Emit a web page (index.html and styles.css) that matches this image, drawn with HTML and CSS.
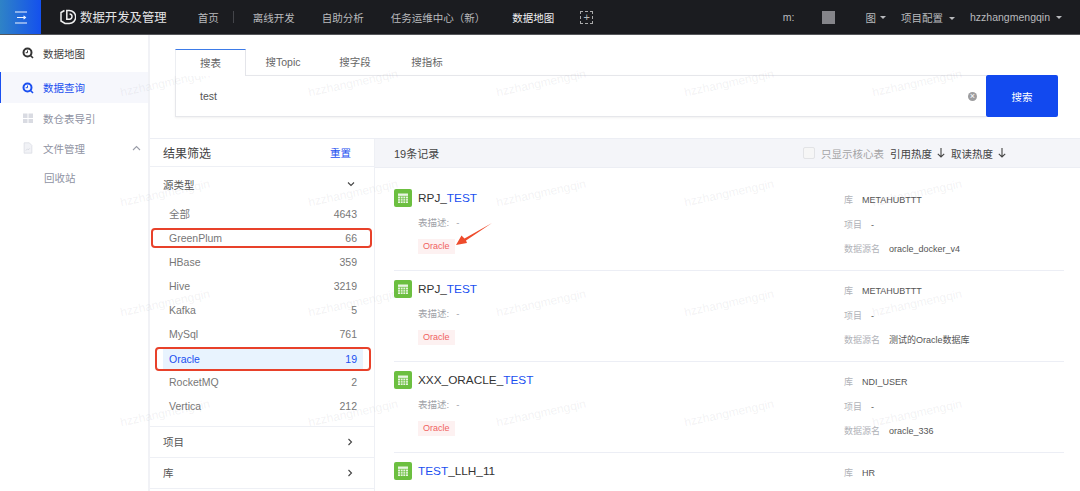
FILE: index.html
```html
<!DOCTYPE html>
<html lang="zh-CN">
<head>
    <meta charset="UTF-8">
    <title>数据地图</title>
    <link rel="stylesheet" href="styles.css">
</head>
<body>

    <!-- Top bar -->
    <div class="navbar">
        <div class="menu-btn">
            <svg width="12" height="13" viewBox="0 0 12 13"><path d="M0 1h12M0 12h12M2 6.500h7.500M8.500 4.800 10.500 6.500 8.500 8.200" fill="none" stroke="#f2f6ff" stroke-width="1.100"/></svg>
        </div>
        <div class="logo">
            <svg width="16" height="16" viewBox="0 0 16 16"><path d="M4.500 1.500 1 3.500V12l4 2.500h4.200a6.500 6.500 0 0 0 0-13H6.800v8.700h2.400a2.600 2.600 0 0 0 .4-5.200" fill="none" stroke="#f0f0f0" stroke-width="1.500"/></svg>
            <span>数据开发及管理</span>
        </div>
        <div class="nav-links">
            <a class="nav-home">首页</a>
            <i class="nav-sep"></i>
            <a>离线开发</a>
            <a>自助分析</a>
            <a>任务运维中心（新）</a>
            <a class="active">数据地图</a>
            <span class="nav-add">+</span>
        </div>
        <div class="nav-right">
            <span class="nav-project">m:<b class="redact"></b>图<i class="caret"></i></span>
            <span>项目配置<i class="caret"></i></span>
            <span>hzzhangmengqin<i class="caret"></i></span>
        </div>
    </div>

    <div class="page">
        <!-- Sidebar -->
        <div class="sidebar">
            <div class="side-title">
                <svg class="side-icon" viewBox="0 0 12 12"><circle cx="5.500" cy="5.500" r="4" fill="none" stroke="#333" stroke-width="2"/><path d="M8.500 8.500 11 11" stroke="#333" stroke-width="1.600"/><path d="M5.500 3.500v2.200H3.700" fill="none" stroke="#333"/></svg>
                数据地图
            </div>
            <div class="side-item current">
                <svg class="side-icon" viewBox="0 0 12 12"><circle cx="5.500" cy="5.500" r="4" fill="none" stroke="#1a4ff0" stroke-width="2"/><path d="M8.500 8.500 11 11" stroke="#1a4ff0" stroke-width="1.600"/><path d="M5.500 3.500v2.200H3.700" fill="none" stroke="#1a4ff0"/></svg>
                数据查询
            </div>
            <div class="side-item">
                <svg class="side-icon" viewBox="0 0 12 12"><path d="M1 1.500h4.500V6H1zM6.500 1.500H11V6H6.500zM1 7h4.500v4H1zM6.500 7H11v4H6.500z" fill="#d9dbe2"/></svg>
                数仓表导引
            </div>
            <div class="side-item">
                <svg class="side-icon" viewBox="0 0 12 14"><path d="M1.500 1h6l3 3v9h-9z" fill="#f1f2f6" stroke="#dcdee5"/><path d="M3.500 10l2-2 1 1L8 7.500" fill="none" stroke="#d3d5dd"/></svg>
                文件管理
                <svg class="side-chevron" width="9" height="6" viewBox="0 0 9 6"><path d="M1 5 4.500 1.500 8 5" fill="none" stroke="#9a9da8" stroke-width="1.100"/></svg>
            </div>
            <div class="side-sub">回收站</div>
        </div>

        <div class="content">
            <!-- Search -->
            <div class="search-area">
                <div class="tabs">
                    <div class="tab active">搜表</div>
                    <div class="tab tab-topic">搜Topic</div>
                    <div class="tab tab-field">搜字段</div>
                    <div class="tab tab-metric">搜指标</div>
                </div>
                <div class="search-row">
                    <div class="search-input">
                        <span>test</span>
                        <i class="clear-btn">×</i>
                    </div>
                    <button class="search-btn">搜索</button>
                </div>
            </div>

            <div class="main">
                <!-- Filters -->
                <div class="filters">
                    <div class="filters-head">
                        <span>结果筛选</span>
                        <a>重置</a>
                    </div>
                    <div class="group-title">
                        <span>源类型</span>
                        <svg width="8" height="6" viewBox="0 0 8 6"><path d="M1 1.500 4 4.500 7 1.500" fill="none" stroke="#444" stroke-width="1.100"/></svg>
                    </div>
                    <div class="filter-list">
                        <div class="filter-row"><span>全部</span><span>4643</span></div>
                        <div class="filter-row marked"><span>GreenPlum</span><span>66</span></div>
                        <div class="filter-row"><span>HBase</span><span>359</span></div>
                        <div class="filter-row"><span>Hive</span><span>3219</span></div>
                        <div class="filter-row"><span>Kafka</span><span>5</span></div>
                        <div class="filter-row"><span>MySql</span><span>761</span></div>
                        <div class="filter-row selected"><span>Oracle</span><span>19</span></div>
                        <div class="filter-row"><span>RocketMQ</span><span>2</span></div>
                        <div class="filter-row"><span>Vertica</span><span>212</span></div>
                    </div>
                    <div class="group-closed">
                        <span>项目</span>
                        <svg width="6" height="8" viewBox="0 0 6 8"><path d="M1.500 1 4.500 4 1.500 7" fill="none" stroke="#444" stroke-width="1.100"/></svg>
                    </div>
                    <div class="group-closed">
                        <span>库</span>
                        <svg width="6" height="8" viewBox="0 0 6 8"><path d="M1.500 1 4.500 4 1.500 7" fill="none" stroke="#444" stroke-width="1.100"/></svg>
                    </div>
                </div>

                <!-- Results -->
                <div class="results">
                    <div class="results-head">
                        <span class="count">19条记录</span>
                        <div class="sorts">
                            <span class="core-check"><i></i>只显示核心表</span>
                            <span class="sort">引用热度<svg width="8" height="10" viewBox="0 0 8 10"><path d="M4 0v9M.8 5.800 4 9l3.200-3.200" fill="none" stroke="#444" stroke-width="1.100"/></svg></span>
                            <span class="sort">取读热度<svg width="8" height="10" viewBox="0 0 8 10"><path d="M4 0v9M.8 5.800 4 9l3.200-3.200" fill="none" stroke="#444" stroke-width="1.100"/></svg></span>
                        </div>
                    </div>
                    <div class="result-list">
                        <div class="result">
                            <div class="result-left">
                                <div class="result-name">
                                    <svg class="table-icon" viewBox="0 0 18 18"><rect width="18" height="18" rx="2" fill="#6cbf40"/><path d="M4 4.500h10v9.500H4z" fill="#e9f5e2"/><path d="M4 7.300h10M4 9.700h10M4 12h10M6.500 7.300V14M9 7.300V14M11.500 7.300V14" stroke="#6cbf40" stroke-width=".7"/></svg>
                                    RPJ_<em>TEST</em>
                                </div>
                                <div class="result-desc">表描述:<span>-</span></div>
                                <span class="tag">Oracle</span>
                                <svg class="arrow" width="40" height="24" viewBox="0 0 40 24"><path d="M2 23 7.500 13.500 10.500 16.500 38 1 12 18.500 13 21z" fill="#ee4b2b"/></svg>
                            </div>
                            <div class="result-meta">
                                <div><label>库</label>METAHUBTTT</div>
                                <div><label>项目</label>-</div>
                                <div><label>数据源名</label>oracle_docker_v4</div>
                            </div>
                        </div>
                        <div class="result">
                            <div class="result-left">
                                <div class="result-name">
                                    <svg class="table-icon" viewBox="0 0 18 18"><rect width="18" height="18" rx="2" fill="#6cbf40"/><path d="M4 4.500h10v9.500H4z" fill="#e9f5e2"/><path d="M4 7.300h10M4 9.700h10M4 12h10M6.500 7.300V14M9 7.300V14M11.500 7.300V14" stroke="#6cbf40" stroke-width=".7"/></svg>
                                    RPJ_<em>TEST</em>
                                </div>
                                <div class="result-desc">表描述:<span>-</span></div>
                                <span class="tag">Oracle</span>
                            </div>
                            <div class="result-meta">
                                <div><label>库</label>METAHUBTTT</div>
                                <div><label>项目</label>-</div>
                                <div><label>数据源名</label>测试的Oracle数据库</div>
                            </div>
                        </div>
                        <div class="result">
                            <div class="result-left">
                                <div class="result-name">
                                    <svg class="table-icon" viewBox="0 0 18 18"><rect width="18" height="18" rx="2" fill="#6cbf40"/><path d="M4 4.500h10v9.500H4z" fill="#e9f5e2"/><path d="M4 7.300h10M4 9.700h10M4 12h10M6.500 7.300V14M9 7.300V14M11.500 7.300V14" stroke="#6cbf40" stroke-width=".7"/></svg>
                                    XXX_ORACLE_<em>TEST</em>
                                </div>
                                <div class="result-desc">表描述:<span>-</span></div>
                                <span class="tag">Oracle</span>
                            </div>
                            <div class="result-meta">
                                <div><label>库</label>NDI_USER</div>
                                <div><label>项目</label>-</div>
                                <div><label>数据源名</label>oracle_336</div>
                            </div>
                        </div>
                        <div class="result">
                            <div class="result-left">
                                <div class="result-name">
                                    <svg class="table-icon" viewBox="0 0 18 18"><rect width="18" height="18" rx="2" fill="#6cbf40"/><path d="M4 4.500h10v9.500H4z" fill="#e9f5e2"/><path d="M4 7.300h10M4 9.700h10M4 12h10M6.500 7.300V14M9 7.300V14M11.500 7.300V14" stroke="#6cbf40" stroke-width=".7"/></svg>
                                    <em>TEST</em>_LLH_11
                                </div>
                                <div class="result-desc">表描述:<span>-</span></div>
                            </div>
                            <div class="result-meta">
                                <div><label>库</label>HR</div>
                            </div>
                        </div>
                    </div>
                </div>
            </div>
        </div>
    </div>

    <!-- Watermark laid over the page -->
    <div class="watermark">
        <span>hzzhangmengqin</span><span>hzzhangmengqin</span><span>hzzhangmengqin</span><span>hzzhangmengqin</span><span>hzzhangmengqin</span>
        <span>hzzhangmengqin</span><span>hzzhangmengqin</span><span>hzzhangmengqin</span><span>hzzhangmengqin</span><span>hzzhangmengqin</span>
        <span>hzzhangmengqin</span><span>hzzhangmengqin</span><span>hzzhangmengqin</span><span>hzzhangmengqin</span><span>hzzhangmengqin</span>
        <span>hzzhangmengqin</span><span>hzzhangmengqin</span><span>hzzhangmengqin</span><span>hzzhangmengqin</span><span>hzzhangmengqin</span>
    </div>

</body>
</html>
```

FILE: styles.css
```css
/* Reset */
* {
    margin: 0;
    padding: 0;
    box-sizing: border-box;
}

html, body {
    height: 491px;
    overflow: hidden;
}

body {
    position: relative;
    background-color: #fff;
    color: #333;
    font-family: "Liberation Sans", "Noto Sans CJK SC", sans-serif;
    font-size: 10.5px;
}

/* Top bar */
.navbar {
    display: flex;
    align-items: center;
    height: 35px;
    background-color: #1b1c20;
    border-bottom: 1px solid #55565a;
    color: #b9babd;
}

.menu-btn {
    display: flex;
    align-items: center;
    justify-content: center;
    width: 41px;
    height: 34px;
    background: linear-gradient(90deg, #2f83c6, #1450ee);
}

.logo {
    display: flex;
    align-items: center;
    gap: 4px;
    margin-left: 19px;
    color: #e4e4e6;
    font-size: 12.4px;
}

.nav-links {
    display: flex;
    align-items: center;
    margin-left: 31px;
}

.nav-links a {
    margin-right: 27px;
}

.nav-links a.nav-home {
    margin-right: 14px;
}

.nav-sep {
    width: 1px;
    height: 12px;
    background-color: #44454a;
    margin-right: 19px;
}

.nav-links a.active {
    color: #f0f0f1;
    margin-right: 26px;
}

.nav-add {
    display: flex;
    align-items: center;
    justify-content: center;
    width: 13px;
    height: 13px;
    border: 1px dashed #aaa;
    font-size: 11px;
    line-height: 1;
}

.nav-right {
    display: flex;
    align-items: center;
    gap: 15px;
    margin-left: auto;
    margin-right: 18px;
}

.nav-project {
    display: flex;
    align-items: center;
}

.redact {
    display: block;
    width: 13px;
    height: 13px;
    margin: 0 31px 0 27px;
    background-color: #85858a;
}

.caret {
    display: inline-block;
    margin-left: 6px;
    vertical-align: 2px;
    border-left: 3px solid transparent;
    border-right: 3px solid transparent;
    border-top: 3px solid #b9babd;
}

.nav-project .caret {
    margin-left: 4px;
}

/* Page */
.page {
    display: flex;
    height: 456px;
}

.sidebar {
    flex: none;
    width: 150px;
    border-right: 2px solid #f1f2f6;
    color: #8f93a3;
}

.side-title,
.side-item {
    position: relative;
    display: flex;
    align-items: center;
    height: 30px;
    padding-left: 22px;
    gap: 9px;
}

.side-title {
    height: 36px;
    margin-bottom: 1px;
    color: #444;
}

.side-item.current {
    height: 31px;
    background-color: #f6f7fc;
    border-left: 1px solid #1a4ff0;
    padding-left: 21px;
    color: #1a4ff0;
}

.side-icon {
    width: 12px;
    height: 12px;
}

.side-chevron {
    position: absolute;
    right: 7px;
    top: 12px;
}

.side-sub {
    padding-left: 44px;
    line-height: 30px;
}

.content {
    flex: 1;
    min-width: 0;
}

/* Search */
.search-area {
    height: 103px;
    padding: 14px 22px 0 25px;
}

.tabs {
    display: flex;
    height: 27px;
}

.tab {
    line-height: 26px;
    text-align: center;
    color: #666;
}

.tab.active {
    width: 71px;
    border-top: 1px solid #3d7be8;
    border-right: 1px solid #e4e5ea;
    border-left: 1px solid #eceef2;
    background-color: #fff;
    position: relative;
    z-index: 1;
}

.tab-topic {
    width: 74px;
}

.tab-field {
    width: 70px;
}

.tab-metric {
    width: 74px;
}

.search-row {
    display: flex;
    margin-top: -1px;
}

.search-input {
    display: flex;
    flex: 1;
    align-items: center;
    justify-content: space-between;
    height: 42px;
    padding: 0 9px 0 24px;
    border: 1px solid #e6e7eb;
    border-right: 0;
    box-shadow: 0 1px 2px rgba(0, 0, 0, 0.06);
    color: #555;
}

.clear-btn {
    display: flex;
    align-items: center;
    justify-content: center;
    width: 9px;
    height: 9px;
    border-radius: 50%;
    background-color: #9d9d9f;
    color: #fff;
    font-style: normal;
    font-size: 9px;
    line-height: 1;
}

.search-btn {
    width: 72px;
    height: 42px;
    border: none;
    border-radius: 2px;
    background-color: #1249ef;
    color: #fff;
    font-family: inherit;
    font-size: 10.5px;
}

/* Main area */
.main {
    display: flex;
    height: 353px;
    border-top: 1px solid #eceef4;
}

.filters {
    flex: none;
    width: 225px;
    border-right: 1px solid #eef0f5;
}

.filters-head {
    display: flex;
    align-items: center;
    justify-content: space-between;
    height: 28px;
    padding: 0 23px 0 13px;
    border-bottom: 1px solid #eef0f5;
    font-size: 12px;
    color: #444;
}

.filters-head a {
    color: #1a4ff0;
    font-size: 10.5px;
}

.group-title {
    display: flex;
    align-items: center;
    justify-content: space-between;
    height: 34.5px;
    padding: 0 19px 0 13px;
    color: #555;
}

.filter-list {
    padding-bottom: 7.5px;
    border-bottom: 1px solid #eef0f5;
}

.filter-row {
    position: relative;
    display: flex;
    justify-content: space-between;
    align-items: center;
    height: 24.1px;
    padding: 0 17px 0 19px;
    color: #777;
}

.filter-row.selected {
    margin: 0 11px 0 13px;
    padding: 0 6px;
    border-top: 3px solid transparent;
    border-bottom: 1px solid transparent;
    background-color: #e8f3fe;
    background-clip: padding-box;
    color: #1a4ff0;
}

/* Red annotation boxes drawn on the screenshot */
.filter-row.marked::after,
.filter-row.selected::after {
    content: "";
    position: absolute;
    border: 2px solid #e8412a;
    border-radius: 4px;
}

.filter-row.marked::after {
    top: 2px;
    bottom: 2px;
    left: 1px;
    right: 2px;
}

.filter-row.selected::after {
    top: -2px;
    bottom: -2px;
    left: -8px;
    right: -8px;
}

.group-closed {
    display: flex;
    align-items: center;
    justify-content: space-between;
    height: 31px;
    padding: 0 21px 0 13px;
    border-bottom: 1px solid #eef0f5;
    color: #555;
}

/* Results */
.results {
    flex: 1;
    min-width: 0;
}

.results-head {
    display: flex;
    align-items: center;
    justify-content: space-between;
    height: 29px;
    padding: 0 74px 0 19px;
    background-color: #f4f5f9;
    border-bottom: 1px solid #eceef4;
    color: #444;
}

.count {
    font-size: 11px;
}

.sorts {
    display: flex;
    align-items: center;
    gap: 6px;
}

.sort {
    display: flex;
    align-items: center;
    gap: 5px;
}

.core-check {
    display: flex;
    align-items: center;
    gap: 6px;
    color: #a4a4a6;
}

.core-check i {
    width: 12px;
    height: 12px;
    border: 1px solid #e2e3e6;
    border-radius: 2px;
    background-color: #f6f6f6;
}

.result-list {
    padding: 12px 16px 0 19px;
}

.result {
    display: flex;
    height: 91px;
    padding-top: 9px;
    border-bottom: 1px solid #eceef5;
}

.result-left {
    position: relative;
    flex: 1;
}

.result-name {
    display: flex;
    align-items: center;
    font-size: 11.8px;
    color: #333;
    height: 18px;
}

.table-icon {
    width: 18px;
    height: 18px;
    margin-right: 6px;
}

.result-name em {
    font-style: normal;
    color: #1a4ff0;
}

.result-desc {
    margin-top: 8px;
    margin-left: 24px;
    font-size: 9.5px;
    color: #a0a2a8;
}

.result-desc span {
    margin-left: 7px;
}

.tag {
    display: inline-block;
    margin-top: 10px;
    margin-left: 24px;
    padding: 0 5px;
    height: 15px;
    line-height: 15px;
    background-color: #fdf1f1;
    color: #f0625f;
    font-size: 9px;
}

.arrow {
    position: absolute;
    left: 60px;
    top: 33px;
}

.result-meta {
    flex: none;
    width: 220px;
    padding-top: 4px;
    font-size: 9px;
    color: #555;
}

.result-meta div {
    height: 24.5px;
}

.result-meta label {
    margin-right: 9px;
    color: #b0b2b8;
}

/* Watermark */
.watermark {
    position: absolute;
    left: 81px;
    top: 75px;
    display: grid;
    grid-template-columns: repeat(5, 188px);
    grid-auto-rows: 110px;
    pointer-events: none;
}

.watermark span {
    display: block;
    transform: rotate(-12deg);
    font-size: 12px;
    text-align: center;
    color: rgba(120, 125, 140, 0.1);
}
```
